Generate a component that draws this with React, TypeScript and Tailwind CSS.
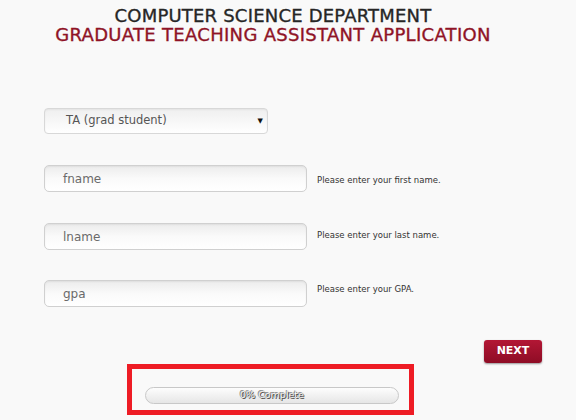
import React from "react";

export default function App() {
  const inputCls =
    "w-[263px] h-[27px] rounded-[5px] border border-[#d0d0d0] bg-gradient-to-b from-[#ececec] via-[#fafafa] to-[#ffffff] pl-[18px] text-[12px] text-[#6a6a6a] shadow-[inset_0_1px_2px_rgba(0,0,0,0.06)] flex items-center";
  const labelCls = "text-[8.5px] text-[#333] ml-[10px]";
  return (
    <div
      className="w-[576px] h-[420px] bg-[#f9f9f9] overflow-hidden"
      style={{ fontFamily: '"DejaVu Sans", "Open Sans", sans-serif' }}
    >
      <div className="w-[546px] pt-[6px] text-center leading-[19px] [-webkit-text-stroke:0.35px]">
        <div className="text-[18px] text-[#262626] tracking-[0.2px]">COMPUTER SCIENCE DEPARTMENT</div>
        <div className="text-[18px] text-[#8f1326] tracking-[0.3px]">GRADUATE TEACHING ASSISTANT APPLICATION</div>
      </div>

      <div className="pl-[44px] mt-[64px]">
        <div className="w-[224px] h-[26px] rounded-[4px] border border-[#d8d8d8] bg-gradient-to-b from-[#efefef] to-[#ffffff] flex items-center justify-between pl-[21px] pr-[4px] shadow-[inset_0_1px_2px_rgba(0,0,0,0.05)]">
          <span className="text-[11.5px] text-[#555]">TA (grad student)</span>
          <span className="text-[7px] text-[#111]">▼</span>
        </div>

        <div className="flex items-start mt-[31px]">
          <div className={inputCls}>fname</div>
          <span className={labelCls + " mt-[9px]"}>Please enter your first name.</span>
        </div>

        <div className="flex items-start mt-[31px]">
          <div className={inputCls}>lname</div>
          <span className={labelCls + " mt-[6px]"}>Please enter your last name.</span>
        </div>

        <div className="flex items-start mt-[30px]">
          <div className={inputCls}>gpa</div>
          <span className={labelCls + " mt-[3px]"}>Please enter your GPA.</span>
        </div>
      </div>

      <div className="flex justify-end pr-[34px] mt-[33px]">
        <div className="w-[58px] h-[23px] rounded-[3px] bg-gradient-to-b from-[#b31735] to-[#8e0c25] text-white text-[11px] font-bold flex items-center justify-center shadow-[0_1px_2px_rgba(0,0,0,0.4)]">
          NEXT
        </div>
      </div>

      <div className="ml-[127px] w-[287px] h-[51px] border-[5px] border-[#ee1c25] mt-[1px] pt-[18px] pl-[13px]">
        <div className="w-[254px] h-[17px] rounded-full border border-[#c8c8c8] bg-gradient-to-b from-[#fdfdfd] to-[#e6e6e6] flex items-center justify-center">
          <span className="text-[9.5px] text-white [text-shadow:1px_1px_0_#444,-1px_-1px_0_#888,0_0_1px_#222]">0% Complete</span>
        </div>
      </div>
    </div>
  );
}
